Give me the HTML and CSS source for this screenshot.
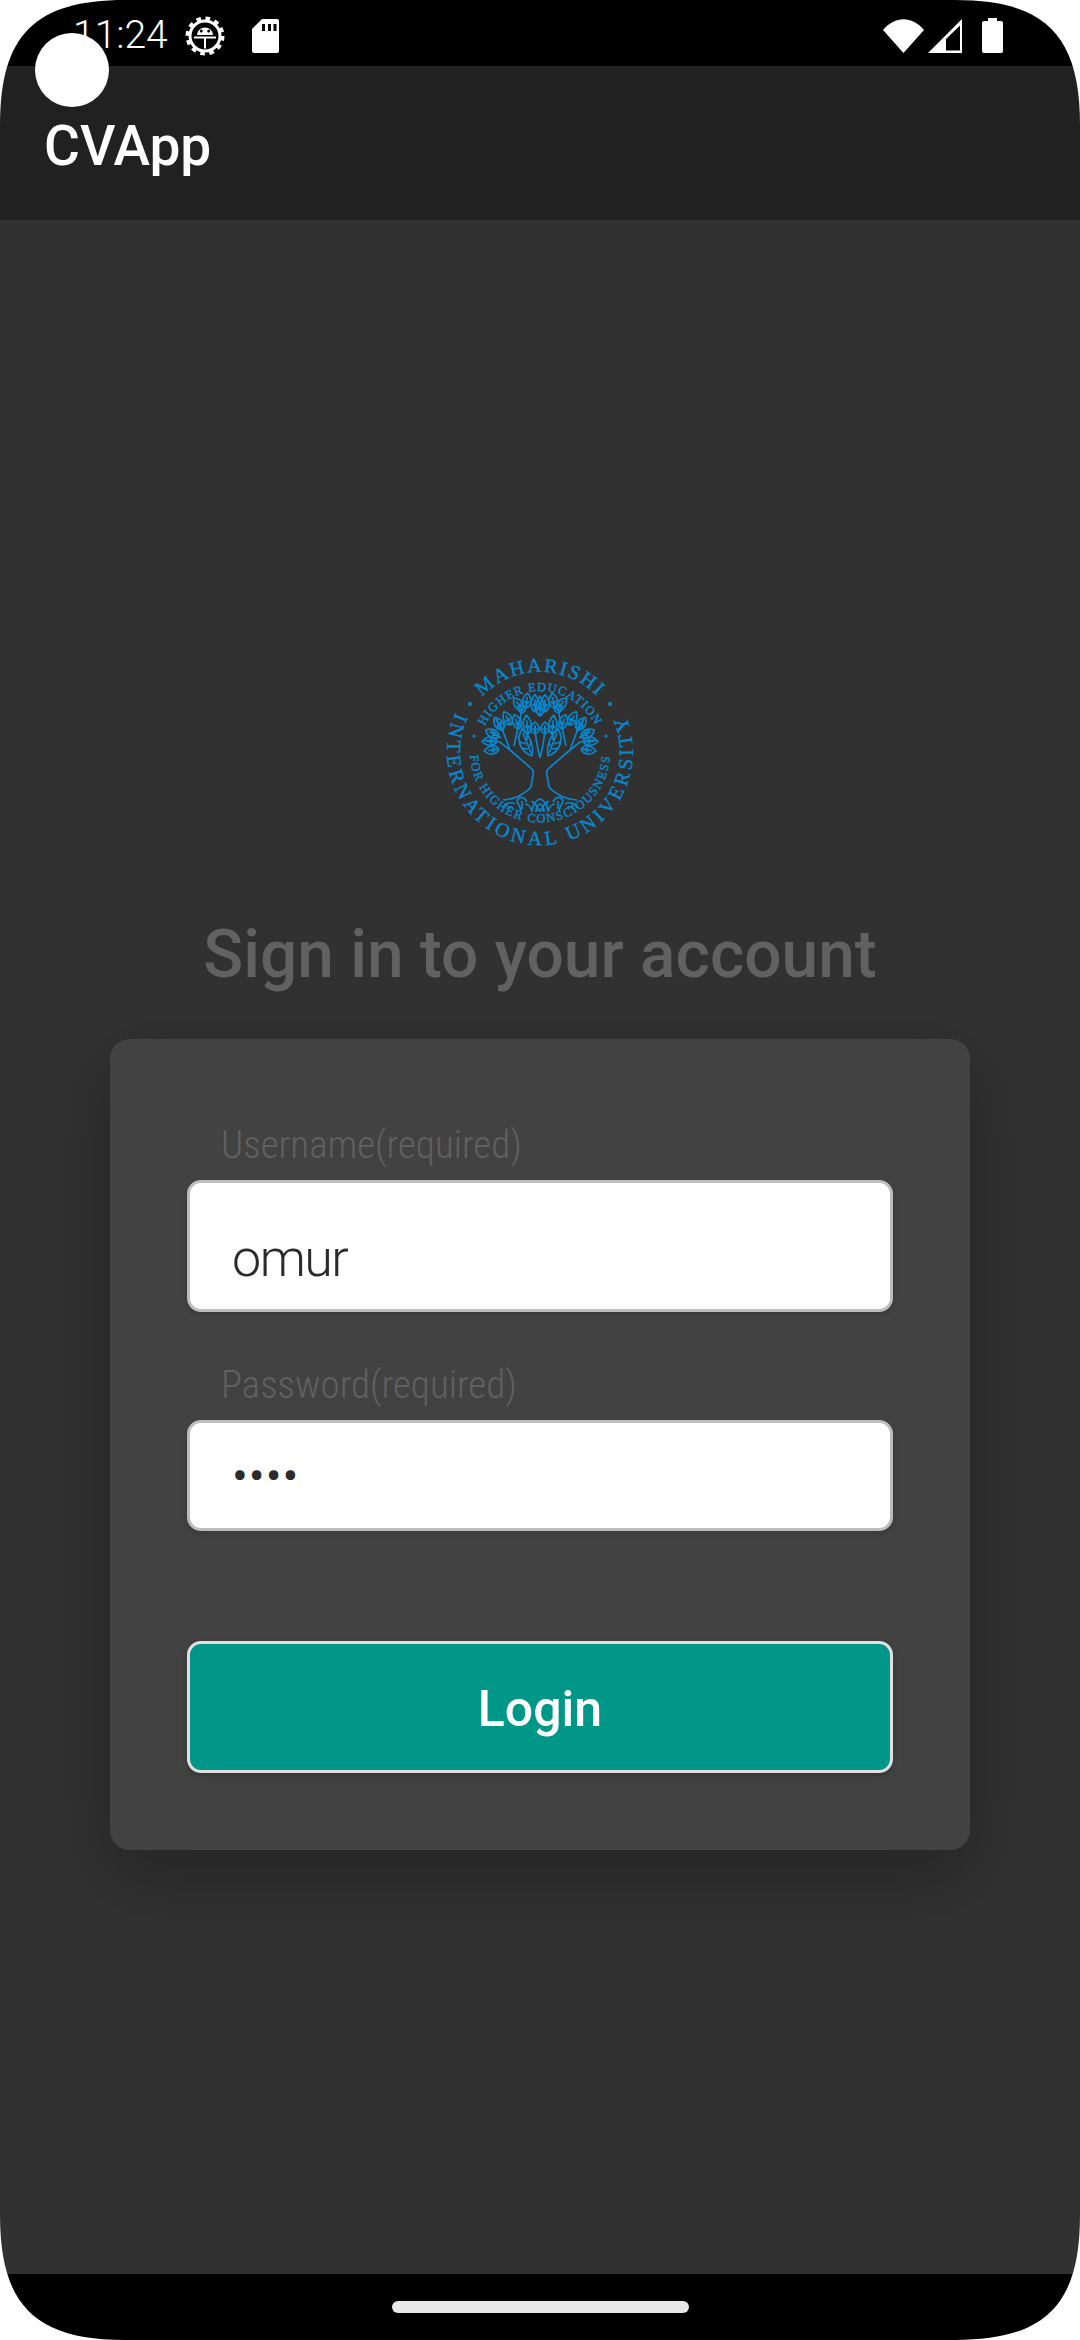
FILE: index.html
```html
<!DOCTYPE html>
<html lang="en">
<head>
  <meta charset="UTF-8" />
  <title>CVApp</title>
  <link rel="stylesheet" href="styles.css">
</head>
<body>
  <div class="phone">
    <div class="status-bar">
      <span class="clock">11:24</span>
      <svg class="ic-gear" viewBox="0 0 40 40">
        <circle cx="20" cy="20" r="15" fill="none" stroke="#fff" stroke-width="3"/>
        <circle cx="20" cy="20" r="17.500" fill="none" stroke="#fff" stroke-width="4" stroke-dasharray="4.580 4.580"/>
        <path d="M9 21.500h22M20 21.500v11" stroke="#fff" stroke-width="2" fill="none"/>
        <path d="M12 19a8 7.500 0 0 1 16 0z" fill="#fff"/>
        <circle cx="16.300" cy="15" r="1.500" fill="#000"/>
        <circle cx="23.700" cy="15" r="1.500" fill="#000"/>
      </svg>
      <svg class="ic-sd" viewBox="0 0 27 34">
        <path d="M10 0h15a2 2 0 0 1 2 2v30a2 2 0 0 1-2 2H2a2 2 0 0 1-2-2V10z" fill="#fff"/>
        <path d="M10 5h3v7h-3zM16 5h3v7h-3zM21.500 5h3v7h-3z" fill="#000"/>
      </svg>
      <span class="status-gap"></span>
      <svg class="ic-wifi" viewBox="0 0 41 34">
        <path d="M0 11C12-3.500 29-3.500 41 11L20.500 34z" fill="#fff"/>
      </svg>
      <svg class="ic-signal" viewBox="0 0 34 34">
        <path d="M34 0v34H0zM32 6.500L18 20v11.500h14z" fill="#fff" fill-rule="evenodd"/>
      </svg>
      <svg class="ic-battery" viewBox="0 0 21 35">
        <path d="M6 0h9v3h4a2 2 0 0 1 2 2v28a2 2 0 0 1-2 2H2a2 2 0 0 1-2-2V5a2 2 0 0 1 2-2h4z" fill="#fff"/>
      </svg>
    </div>

    <header class="app-bar">CVApp</header>

    <main class="content">
      <svg class="logo" viewBox="-100 -100 200 200">
        <defs>
          <path id="ringTop" d="M-80 0A80 80 0 0 1 80 0"/>
          <path id="ringBottom" d="M-85.600 -36.300A93 93 0 1 0 85.600 -36.300"/>
          <path id="innerTop" d="M-61 0A61 61 0 0 1 61 0"/>
          <path id="innerBottom" d="M-69.700 -6A70 70 0 1 0 69.700 -6"/>
          <path id="leaf" d="M0 0C5.500 -3 5.500 -10 0 -15C-5.500 -10 -5.500 -3 0 0M0 -1V-11M0 -4L2.500 -7M0 -4L-2.500 -7"/>
          <g id="half">
            <path d="M-30 -2L-8 17C-6.500 19 -6.500 21 -7 23L-9 35L-12 38C-18 42 -22 47 -37 48"/>
            <path d="M0 6C-3 -6 -5 -14 -5 -26M-30 -2L-40 -10L-56 -12M-30 -2L-39 -26M-39 -14L-49 -22M-37 -20L-44 -33M-26 -6L-18 -43"/>
            <path class="big-leaf" d="M-8 4C-19 0 -25 -12 -18 -23C-10 -16 -6 -6 -8 4M-9 1L-17 -19M-12 -3L-18 -4M-14 -8L-20 -10M-10 -6L-9 -12M-13 -12L-13 -18"/>
            <use href="#leaf" transform="translate(-43 -11) rotate(-92)"/>
            <use href="#leaf" transform="translate(-41 -3) rotate(-98)"/>
            <use href="#leaf" transform="translate(-41 -15) rotate(-62)"/>
            <use href="#leaf" transform="translate(-37 -22) rotate(-35)"/>
            <use href="#leaf" transform="translate(-29 -27) rotate(-28)"/>
            <use href="#leaf" transform="translate(-17 -42) rotate(-38)"/>
            <use href="#leaf" transform="translate(-14 -44) rotate(6)"/>
            <use href="#leaf" transform="translate(-5 -40) scale(1 1.150)"/>
            <use href="#leaf" transform="translate(-5 -18) scale(1 .8)"/>
            <use href="#leaf" transform="translate(-12 -18) rotate(-5) scale(1 1.250)"/>
            <use href="#leaf" transform="translate(-21 -23) rotate(-18)"/>
            <circle class="fruit" cx="-18" cy="-43" r="3.500"/>
            <circle class="fruit" cx="-39" cy="-26" r="3.500"/>
            <path d="M-2 59C-2 54 -6 50 -9 49M-8 59C-10 54 -13 52 -15 52M-13 50C-16 44 -21 44 -23 49C-22 52 -20 54 -19 59M-18 49V57M-25 52C-30 49 -36 52 -37 56M-27 56C-30 54 -32 55 -33 57"/>
          </g>
        </defs>
        <text class="logo-big"><textPath href="#ringTop" startOffset="50%" text-anchor="middle" letter-spacing="1.800">MAHARISHI</textPath></text>
        <text class="logo-big"><textPath href="#ringBottom" startOffset="50%" text-anchor="middle" letter-spacing="3.700">INTERNATIONAL UNIVERSITY</textPath></text>
        <text class="logo-small"><textPath href="#innerTop" startOffset="50%" text-anchor="middle" letter-spacing="1">HIGHER EDUCATION</textPath></text>
        <text class="logo-small"><textPath href="#innerBottom" startOffset="50%" text-anchor="middle" letter-spacing="1.450">FOR HIGHER CONSCIOUSNESS</textPath></text>
        <circle class="logo-dot" cx="-70" cy="-48" r="2"/>
        <circle class="logo-dot" cx="70" cy="-48" r="2"/>
        <circle class="logo-dot" cx="-66" cy="-16" r="1.500"/>
        <circle class="logo-dot" cx="66" cy="-16" r="1.500"/>
        <g class="tree">
          <use href="#half"/>
          <use href="#half" transform="scale(-1 1)"/>
          <path d="M-8 60C-8 52 -3 48 0 47C3 48 8 52 8 60M-4 60C-4 55 -2 53 0 52C2 53 4 55 4 60M0 56V60"/>
          <use href="#leaf" transform="translate(0 -36) scale(1 1.300)"/>
        </g>
      </svg>

      <h1 class="title">Sign in to your account</h1>

      <form class="card">
        <label class="field-label">Username(required)</label>
        <div class="input input-user">omur</div>
        <label class="field-label label-pass">Password(required)</label>
        <div class="input input-pass">••••</div>
        <button class="login" type="button">Login</button>
      </form>
    </main>

    <div class="nav-bar"><span class="home-pill"></span></div>

    <div class="touch-dot"></div>
  </div>
</body>
</html>
```

FILE: styles.css
```css
* {
  box-sizing: border-box;
}
html, body {
  margin: 0;
  background: #fff;
}
.phone {
  position: relative;
  width: 1080px;
  height: 2340px;
  display: flex;
  flex-direction: column;
  overflow: hidden;
  clip-path: path("M0 125C0 35 35 0 125 0H955C1045 0 1080 35 1080 125V2215C1080 2305 1045 2340 955 2340H125C35 2340 0 2305 0 2215Z");
  font-family: Roboto, sans-serif;
}
.status-bar {
  height: 66px;
  background: #000;
  display: flex;
  align-items: center;
  color: #fff;
  padding: 5px 77px 0 73px;
}
.clock {
  font-size: 39px;
  font-weight: 300;
  line-height: 61px;
}
.ic-gear {
  width: 40px;
  height: 40px;
  margin-left: 17px;
}
.ic-sd {
  width: 27px;
  height: 34px;
  margin-left: 27px;
}
.status-gap {
  flex: 1;
}
.ic-wifi {
  width: 41px;
  height: 34px;
}
.ic-signal {
  width: 34px;
  height: 34px;
  margin-left: 4px;
}
.ic-battery {
  width: 21px;
  height: 35px;
  margin-left: 20px;
}
.app-bar {
  height: 154px;
  background: #212121;
  color: #fff;
  font-size: 55px;
  font-weight: 500;
  padding: 50px 0 0 44px;
  line-height: 60px;
}
.content {
  flex: 1;
  background: #313131;
  display: flex;
  flex-direction: column;
  align-items: center;
  padding-top: 432px;
}
.logo {
  width: 200px;
  height: 200px;
}
.logo text {
  font-family: "Liberation Serif", serif;
  fill: #0887cf;
  stroke: #0887cf;
  stroke-width: 0.400;
}
.logo-big {
  font-size: 20px;
}
.logo-small {
  font-size: 12.500px;
}
.logo-dot {
  fill: #0887cf;
}
.tree {
  fill: none;
  stroke: #0887cf;
  stroke-width: 1.700;
}
.tree .big-leaf {
  fill: rgba(8, 135, 207, 0.25);
}
.tree .fruit {
  fill: #313131;
  stroke-width: 2;
}
.title {
  margin: 65px 0 0;
  font-size: 65.800px;
  line-height: 76px;
  font-weight: 500;
  color: #616161;
}
.card {
  width: 860px;
  height: 811px;
  margin-top: 46px;
  background: #424242;
  border-radius: 20px;
  padding: 83px 77px 0;
  box-shadow: 0 25px 70px rgba(0, 0, 0, 0.25);
  display: flex;
  flex-direction: column;
}
.field-label {
  font-size: 39px;
  line-height: 46px;
  font-weight: 300;
  font-stretch: condensed;
  color: #606060;
  padding-left: 34px;
  margin-bottom: 12px;
}
.label-pass {
  margin-top: 50px;
}
.input {
  background: #fff;
  border: 3px solid #bdbdbd;
  border-radius: 14px;
  color: #2b2b2b;
  display: flex;
  align-items: center;
  padding-left: 42px;
  box-shadow: 0 2px 5px rgba(0, 0, 0, 0.15);
}
.input-user {
  height: 132px;
  font-size: 52px;
  font-weight: 300;
  font-stretch: 88%;
  letter-spacing: -1.500px;
  padding-top: 24px;
}
.input-pass {
  height: 111px;
  font-size: 47px;
  letter-spacing: 1px;
}
.login {
  height: 132px;
  margin-top: 110px;
  background: #009688;
  border: 3px solid #e0e0e0;
  border-radius: 14px;
  color: #fff;
  font-family: inherit;
  font-size: 50px;
  font-weight: 500;
  padding: 3px 0 0;
  box-shadow: 0 3px 6px rgba(0, 0, 0, 0.2);
}
.nav-bar {
  height: 66px;
  background: #000;
  display: flex;
  justify-content: center;
  align-items: center;
}
.home-pill {
  width: 297px;
  height: 12px;
  background: #e8e8e8;
  border-radius: 6px;
}
.touch-dot {
  position: absolute;
  left: 35px;
  top: 33px;
  width: 74px;
  height: 74px;
  border-radius: 50%;
  background: #fff;
}
```
